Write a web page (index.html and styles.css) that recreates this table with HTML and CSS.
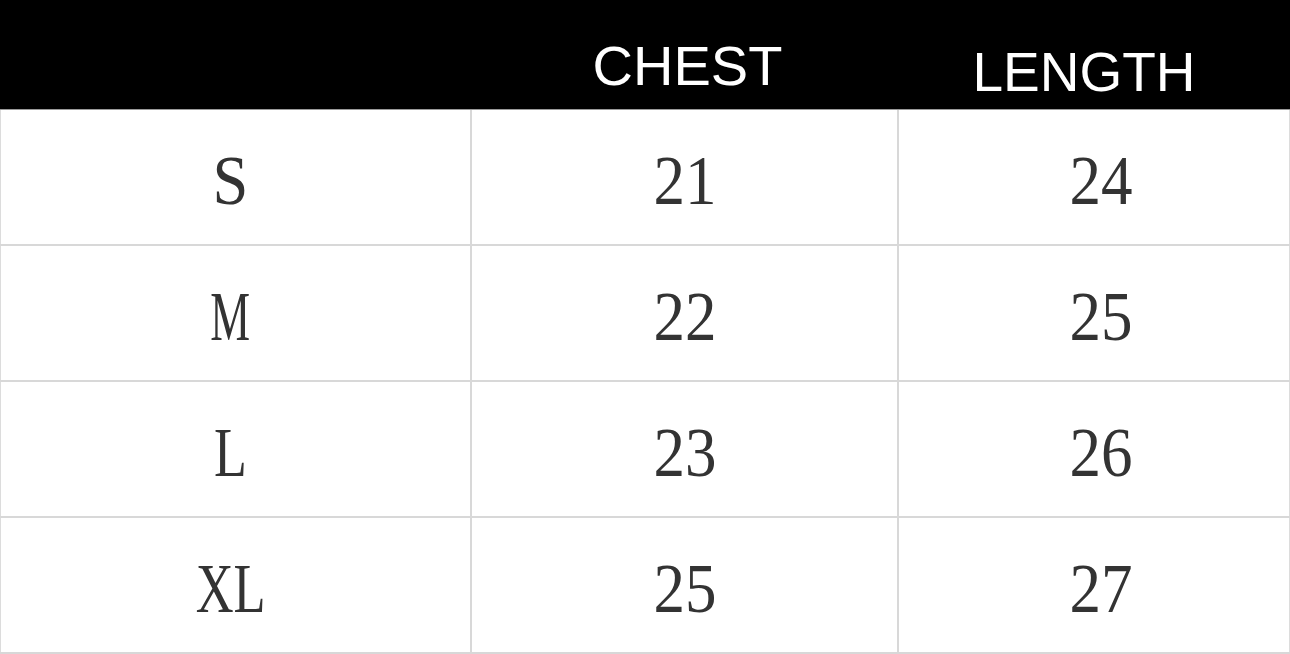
FILE: index.html
```html
<!DOCTYPE html>
<html>
<head>
<meta charset="utf-8">
<link rel="stylesheet" href="styles.css">
</head>
<body>
<div class="chart">
  <div class="head">
    <div class="hcell"></div>
    <div class="hcell chest">CHEST</div>
    <div class="hcell length">LENGTH</div>
  </div>
  <div class="row"><div class="cell c1"><span class="t ls">S</span></div><div class="cell c2"><span class="t num">21</span></div><div class="cell c3"><span class="t num">24</span></div></div>
  <div class="row"><div class="cell c1"><span class="t lm">M</span></div><div class="cell c2"><span class="t num">22</span></div><div class="cell c3"><span class="t num">25</span></div></div>
  <div class="row"><div class="cell c1"><span class="t ll">L</span></div><div class="cell c2"><span class="t num">23</span></div><div class="cell c3"><span class="t num">26</span></div></div>
  <div class="row"><div class="cell c1"><span class="t lxl">XL</span></div><div class="cell c2"><span class="t num">25</span></div><div class="cell c3"><span class="t num">27</span></div></div>
</div>
</body>
</html>
```

FILE: styles.css
```css
html, body {
  margin: 0;
  padding: 0;
  background: #ffffff;
}
.chart {
  width: 1290px;
  height: 654px;
  overflow: hidden;
}
.head {
  display: grid;
  grid-template-columns: 470px 427px 393px;
  height: 110px;
  box-sizing: border-box;
  background: #000000;
  border-bottom: 1px solid #9a9a9a;
}
.hcell {
  display: flex;
  justify-content: center;
  align-items: flex-start;
  font-family: "Liberation Sans", Arial, sans-serif;
  color: #ffffff;
  line-height: 1;
}
.chest {
  font-size: 56px;
  padding-top: 38px;
  padding-left: 8px;
}
.length {
  font-size: 55px;
  padding-top: 45px;
  padding-right: 19px;
}
.row {
  display: grid;
  grid-template-columns: 470px 427px 393px;
  height: 136px;
  box-sizing: border-box;
  border-bottom: 2px solid #d8d8d8;
}
.cell {
  box-sizing: border-box;
  display: flex;
  justify-content: center;
  align-items: center;
  font-family: "Liberation Serif", "Times New Roman", serif;
  font-size: 70px;
  color: #333333;
  border-left: 2px solid #d8d8d8;
  padding-top: 8px;
}
.c1 {
  border-left: 1px solid #dcdcdc;
  padding-right: 10px;
}
.c3 {
  border-right: 1px solid #dcdcdc;
  padding-left: 14px;
}
.t {
  display: inline-block;
}
.num {
  transform: scaleX(0.9);
}
.ls {
  transform: scaleX(0.92);
}
.lm {
  transform: scaleX(0.64);
}
.ll {
  transform: scaleX(0.77);
}
.lxl {
  transform: scaleX(0.75);
}
```
